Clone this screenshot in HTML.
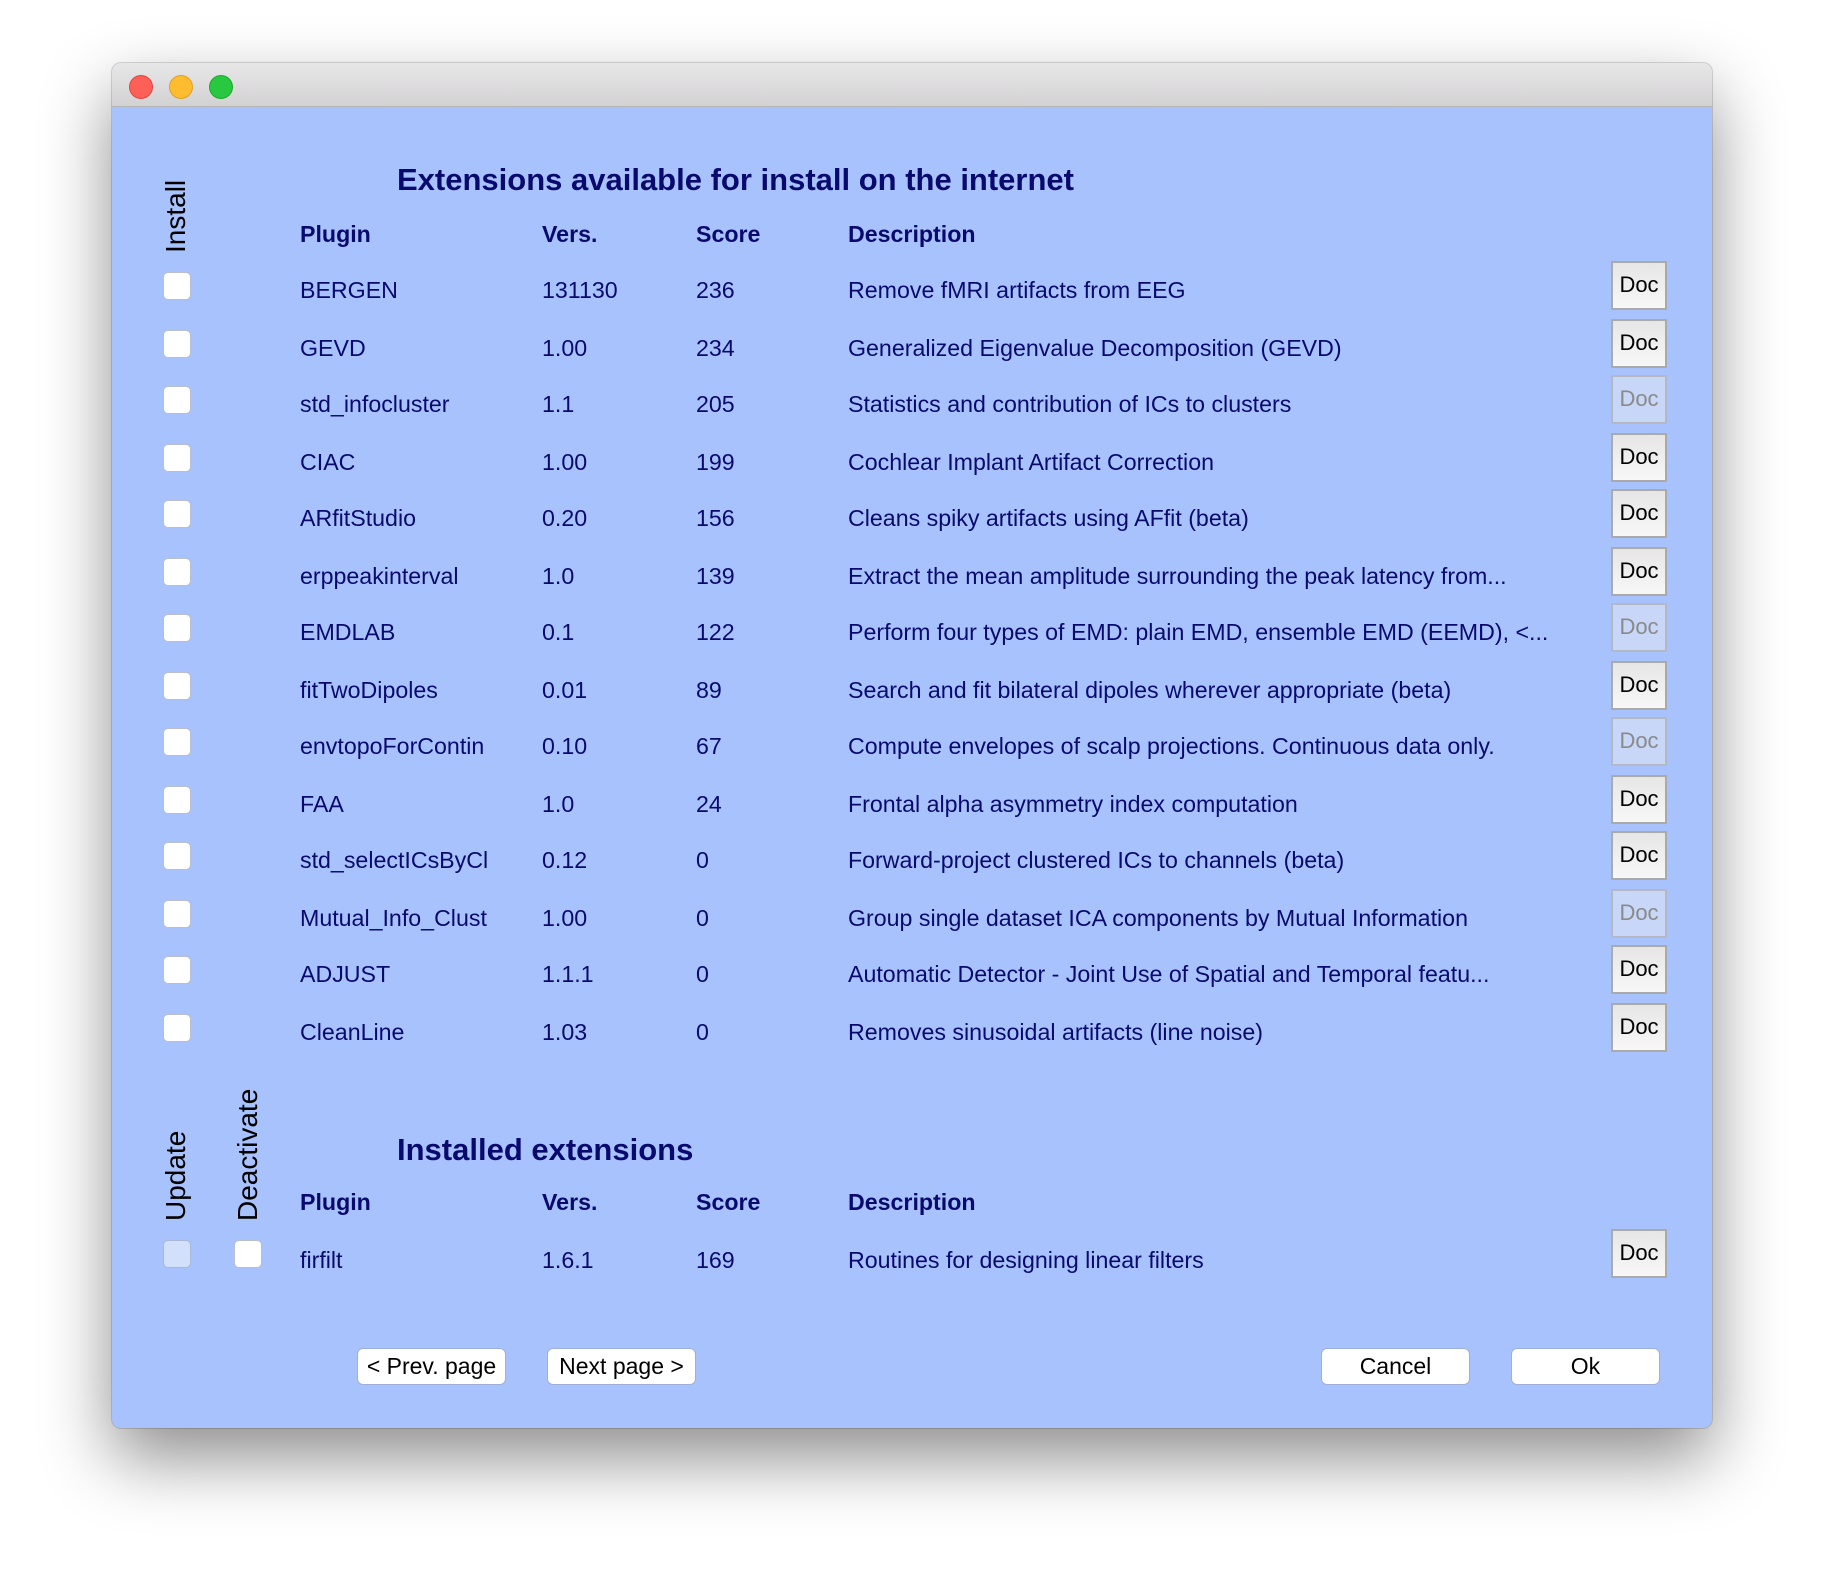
<!DOCTYPE html>
<html><head><meta charset="utf-8"><style>
*{margin:0;padding:0;box-sizing:border-box}
body{width:1824px;height:1588px;background:#fff;position:relative;overflow:hidden;font-family:"Liberation Sans",Arial,sans-serif}
.win{position:absolute;left:112px;top:63px;width:1600px;height:1365px;border-radius:9px;background:#a8c2fd;box-shadow:0 30px 70px rgba(0,0,0,.45),0 0 0 1px rgba(0,0,0,.15);overflow:hidden}
.tb{position:absolute;left:0;top:0;width:100%;height:44px;background:linear-gradient(#e8e7e8,#d3d2d3);border-bottom:1px solid #b5b5b5}
.l{position:absolute;top:12px;width:24px;height:24px;border-radius:50%}
.t{position:absolute;line-height:30px;height:30px;white-space:nowrap;color:#0a0a6e;font-size:23.2px}
.b{font-weight:bold}
.h{font-size:31px;font-weight:bold}
.cb{position:absolute;width:28px;height:28px;background:#fff;border:1px solid #b9bfcc;border-radius:5px}
.doc{position:absolute;left:1499px;width:56px;height:49px;border:2px solid #aaa;background:linear-gradient(#e6e6e6,#f7f7f7);font-size:22px;line-height:43px;text-align:center;color:#000}
.doc.d{background:#c8d6f7;color:#8a8a8a;border-color:#b3b8c4}
.vt{position:absolute;color:#000;font-size:28px;transform:rotate(-90deg);transform-origin:left top;white-space:nowrap;line-height:28px}
.btn{position:absolute;height:37px;width:149px;background:#fff;border:1px solid #9fb0d8;border-radius:6px;font-size:23px;line-height:35px;text-align:center;color:#000}
</style></head><body>
<div class="win">
<div class="tb"><div class="l" style="left:17px;background:#fe5f57;border:1px solid #e0443e"></div><div class="l" style="left:57px;background:#febc2e;border:1px solid #dea123"></div><div class="l" style="left:97px;background:#28c840;border:1px solid #1aab29"></div></div>

<div class="vt" style="left:50px;top:190px">Install</div>
<div class="vt" style="left:50px;top:1158px">Update</div>
<div class="vt" style="left:122px;top:1158px">Deactivate</div>

<div class="t h" style="left:285px;top:102px">Extensions available for install on the internet</div>
<div class="t b" style="left:188px;top:156px">Plugin</div>
<div class="t b" style="left:430px;top:156px">Vers.</div>
<div class="t b" style="left:584px;top:156px">Score</div>
<div class="t b" style="left:736px;top:156px">Description</div>

<div id="rows"></div>

<div class="t h" style="left:285px;top:1072px">Installed extensions</div>
<div class="t b" style="left:188px;top:1124px">Plugin</div>
<div class="t b" style="left:430px;top:1124px">Vers.</div>
<div class="t b" style="left:584px;top:1124px">Score</div>
<div class="t b" style="left:736px;top:1124px">Description</div>
<div class="cb" style="left:51px;top:1177px;background:#d3e0fb;border-color:#a9b6d4"></div>
<div class="cb" style="left:122px;top:1177px"></div>
<div class="t" style="left:188px;top:1182px">firfilt</div>
<div class="t" style="left:430px;top:1182px">1.6.1</div>
<div class="t" style="left:584px;top:1182px">169</div>
<div class="t" style="left:736px;top:1182px">Routines for designing linear filters</div>
<div class="doc" style="top:1166px">Doc</div>

<div class="btn" style="left:245px;top:1285px">&lt; Prev. page</div>
<div class="btn" style="left:435px;top:1285px">Next page &gt;</div>
<div class="btn" style="left:1209px;top:1285px">Cancel</div>
<div class="btn" style="left:1399px;top:1285px">Ok</div>
</div>
<script>
var d=[["BERGEN","131130","236","Remove fMRI artifacts from EEG",0],
["GEVD","1.00","234","Generalized Eigenvalue Decomposition (GEVD)",0],
["std_infocluster","1.1","205","Statistics and contribution of ICs to clusters",1],
["CIAC","1.00","199","Cochlear Implant Artifact Correction",0],
["ARfitStudio","0.20","156","Cleans spiky artifacts using AFfit (beta)",0],
["erppeakinterval","1.0","139","Extract the mean amplitude surrounding the peak latency from...",0],
["EMDLAB","0.1","122","Perform four types of EMD: plain EMD, ensemble EMD (EEMD), <...",1],
["fitTwoDipoles","0.01","89","Search and fit bilateral dipoles wherever appropriate (beta)",0],
["envtopoForContin","0.10","67","Compute envelopes of scalp projections. Continuous data only.",1],
["FAA","1.0","24","Frontal alpha asymmetry index computation",0],
["std_selectICsByCl","0.12","0","Forward-project clustered ICs to channels (beta)",0],
["Mutual_Info_Clust","1.00","0","Group single dataset ICA components by Mutual Information",1],
["ADJUST","1.1.1","0","Automatic Detector - Joint Use of Spatial and Temporal featu...",0],
["CleanLine","1.03","0","Removes sinusoidal artifacts (line noise)",0]];
var cy=[290,348,404,462,518,576,632,690,746,804,860,918,974,1032],h="";
d.forEach(function(r,i){var c=cy[i]-63;
h+='<div class="cb" style="left:51px;top:'+(c-18)+'px"></div>';
h+='<div class="t" style="left:188px;top:'+(c-15)+'px">'+r[0]+'</div>';
h+='<div class="t" style="left:430px;top:'+(c-15)+'px">'+r[1]+'</div>';
h+='<div class="t" style="left:584px;top:'+(c-15)+'px">'+r[2]+'</div>';
h+='<div class="t" style="left:736px;top:'+(c-15)+'px">'+r[3].replace(/</g,"&lt;")+'</div>';
h+='<div class="doc'+(r[4]?' d':'')+'" style="top:'+(c-29)+'px">Doc</div>';});
document.getElementById("rows").innerHTML=h;
</script>
</body></html>
